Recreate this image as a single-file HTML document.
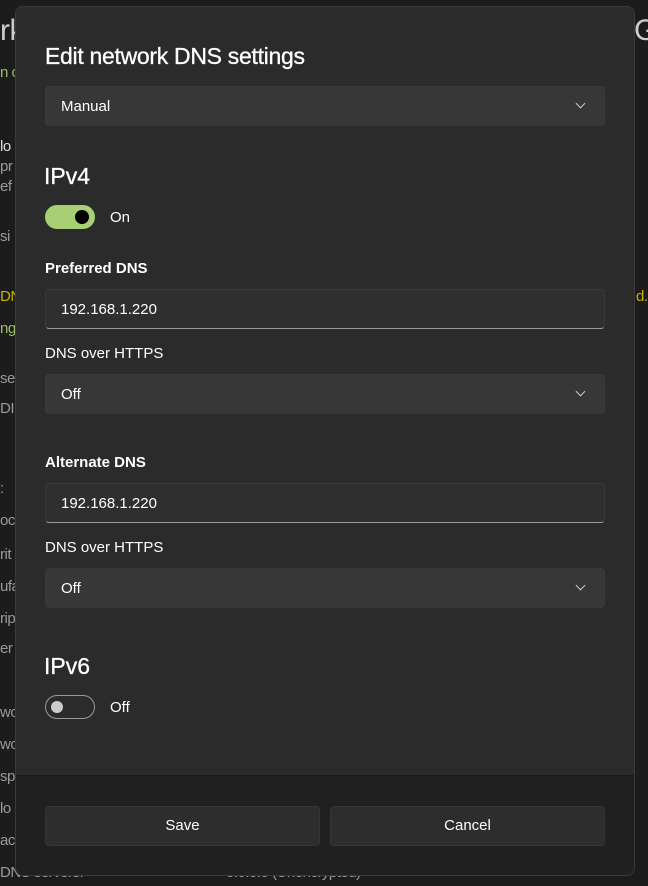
<!DOCTYPE html>
<html><head><style>
*{box-sizing:border-box;margin:0;padding:0}
body{width:648px;height:886px;background:#1c1c1c;font-family:"Liberation Sans",sans-serif;color:#fff;position:relative;overflow:hidden}
.bg{position:absolute;color:#9a9a9a;font-size:15px;letter-spacing:-0.5px}
.dlg{position:absolute;left:15px;top:6px;width:620px;height:870px;background:#2b2b2b;border:1px solid #3a3a3a;border-radius:8px;overflow:hidden}
.foot{position:absolute;left:0;right:0;top:768px;bottom:0;background:#202020;border-top:1px solid #1a1a1a}
.a{position:absolute}
h1{position:absolute;left:29px;top:36px;font-size:23px;font-weight:normal;letter-spacing:-0.3px;-webkit-text-stroke:0.3px #fff}
.box{position:absolute;left:29px;width:560px;height:40px;background:#373737;border-radius:4px;font-size:15px;padding:11px 15px;border:1px solid #3a3a3a}
.inp{background:#2f2f2f;border-bottom:1px solid #9a9a9a}
.chev{position:absolute;right:20px;top:13px;width:7px;height:7px;border-right:1.2px solid #ccc;border-bottom:1.2px solid #ccc;transform:rotate(45deg)}
.h2{position:absolute;left:28px;font-size:23px;-webkit-text-stroke:0.3px #fff}
.lab{position:absolute;left:29px;font-size:15px}
.btn{position:absolute;top:799px;width:275px;height:40px;background:#2d2d2d;border:1px solid #353535;border-radius:4px;font-size:15px;text-align:center;line-height:38px}
</style></head><body>
<div class="bg" style="left:0;top:14px;font-size:30px;color:#ccc">rk</div>
<div class="bg" style="left:634px;top:14px;font-size:30px;color:#ccc">G</div>
<div class="bg" style="left:0;top:64px;color:#9cbd6a">n c</div>
<div class="bg" style="left:0;top:138px;color:#ddd">lo</div>
<div class="bg" style="left:0;top:158px">pr</div>
<div class="bg" style="left:0;top:178px">ef</div>
<div class="bg" style="left:0;top:228px">si</div>
<div class="bg" style="left:0;top:288px;color:#c9b400">DN</div>
<div class="bg" style="left:636px;top:288px;color:#c9b400">d.</div>
<div class="bg" style="left:0;top:320px;color:#9cbd6a">ng</div>
<div class="bg" style="left:0;top:370px">se</div>
<div class="bg" style="left:0;top:400px">DI</div>
<div class="bg" style="left:0;top:480px">:</div>
<div class="bg" style="left:0;top:512px">oc</div>
<div class="bg" style="left:0;top:546px">rit</div>
<div class="bg" style="left:0;top:578px">ufa</div>
<div class="bg" style="left:0;top:610px">rip</div>
<div class="bg" style="left:0;top:640px">er</div>
<div class="bg" style="left:0;top:704px">wo</div>
<div class="bg" style="left:0;top:736px">wo</div>
<div class="bg" style="left:0;top:768px">sp</div>
<div class="bg" style="left:0;top:800px">lo</div>
<div class="bg" style="left:0;top:832px">ac</div>
<div class="bg" style="left:0;top:864px">DNS servers:</div>
<div class="bg" style="left:226px;top:864px">0.0.0.0 (Unencrypted)</div>
<div class="dlg">
<div class="foot"></div>
<h1>Edit network DNS settings</h1>
<div class="box" style="top:79px">Manual<span class="chev"></span></div>
<div class="h2" style="top:156px">IPv4</div>
<div class="a" style="left:29px;top:198px;width:50px;height:24px;border-radius:12px;background:#a8cf73"></div>
<div class="a" style="left:59px;top:203px;width:14px;height:14px;border-radius:7px;background:#000"></div>
<div class="lab" style="left:94px;top:202px">On</div>
<div class="lab" style="top:253px;font-weight:bold">Preferred DNS</div>
<div class="box inp" style="top:282px">192.168.1.220</div>
<div class="lab" style="top:338px">DNS over HTTPS</div>
<div class="box" style="top:367px">Off<span class="chev"></span></div>
<div class="lab" style="top:447px;font-weight:bold">Alternate DNS</div>
<div class="box inp" style="top:476px">192.168.1.220</div>
<div class="lab" style="top:532px">DNS over HTTPS</div>
<div class="box" style="top:561px">Off<span class="chev"></span></div>
<div class="h2" style="top:646px">IPv6</div>
<div class="a" style="left:29px;top:688px;width:50px;height:24px;border-radius:12px;border:1px solid #9a9a9a"></div>
<div class="a" style="left:35px;top:694px;width:12px;height:12px;border-radius:6px;background:#ccc"></div>
<div class="lab" style="left:94px;top:692px">Off</div>
<div class="btn" style="left:29px">Save</div>
<div class="btn" style="left:314px">Cancel</div>
</div>
</body></html>
